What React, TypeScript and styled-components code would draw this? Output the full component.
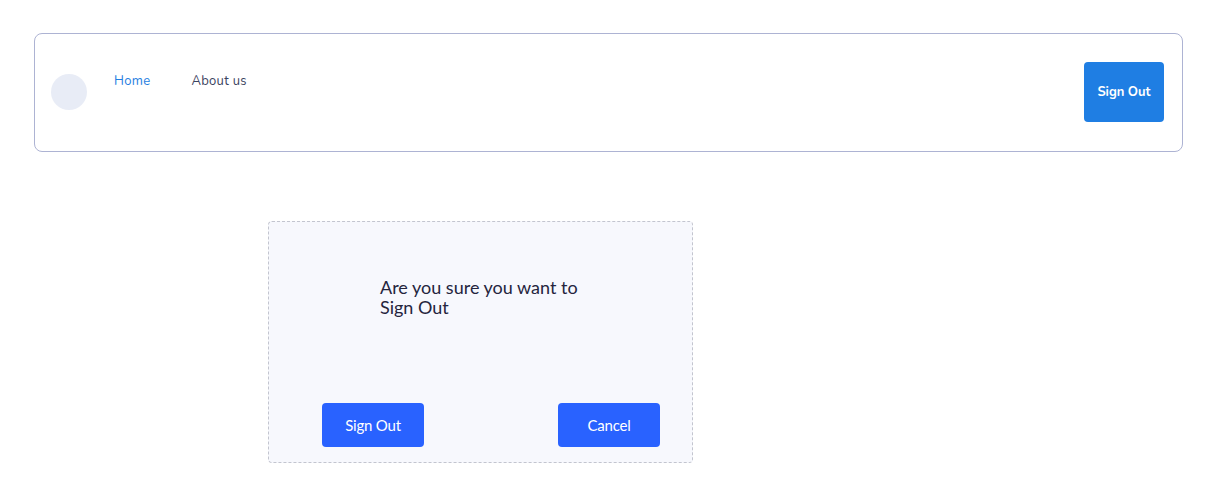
import React from "react";
import styled, { createGlobalStyle } from "styled-components";

const Global = createGlobalStyle`
  html, body { margin: 0; padding: 0; background: #ffffff; }
  body { font-family: Lato, "Liberation Sans", sans-serif; }
  * { box-sizing: border-box; }
`;

const Page = styled.div`
  padding: 33px 33px 0 34px;
  display: flex;
  flex-direction: column;
`;

const Nav = styled.nav`
  height: 119px;
  border: 1px solid #adb3d3;
  border-radius: 8px;
  display: flex;
  align-items: center;
  padding: 0 18px 0 16px;
`;

const Avatar = styled.div`
  width: 36px;
  height: 36px;
  border-radius: 50%;
  background: #e8ecf6;
  margin-top: -1px;
`;

const Links = styled.ul`
  list-style: none;
  margin: 0 0 0 27px;
  padding: 0;
  display: flex;
  gap: 41px;
  align-self: flex-start;
  margin-top: 38px;
`;

const LinkItem = styled.li<{ $active?: boolean }>`
  font-family: Nunito, "Noto Sans", "Open Sans", sans-serif;
  font-size: 13px;
  line-height: 18px;
  letter-spacing: 0.3px;
  color: ${(p) => (p.$active ? "#1f7ee1" : "#3b4360")};
`;

const NavButton = styled.button`
  margin-left: auto;
  margin-top: -2px;
  width: 80px;
  height: 60px;
  border: none;
  border-radius: 4px;
  background: #1f7ee3;
  color: #ffffff;
  font-family: Nunito, "Noto Sans", "Open Sans", sans-serif;
  font-weight: 700;
  font-size: 13px;
`;

const Dialog = styled.div`
  margin: 69px 0 0 234px;
  width: 425px;
  height: 242px;
  border: 1px dashed #c3c5cf;
  border-radius: 4px;
  background: #f7f8fd;
  display: flex;
  flex-direction: column;
  justify-content: space-between;
  padding: 55px 32px 15px 53px;
`;

const Message = styled.p`
  margin: 0 0 0 58px;
  max-width: 210px;
  font-family: Lato, "Liberation Sans", sans-serif;
  font-size: 18px;
  line-height: 20px;
  color: #25253d;
`;

const Actions = styled.div`
  display: flex;
  justify-content: space-between;
`;

const ActionButton = styled.button`
  width: 102px;
  height: 44px;
  border: none;
  border-radius: 4px;
  background: #2962ff;
  color: #ffffff;
  font-family: Lato, "Liberation Sans", sans-serif;
  font-size: 15px;
  letter-spacing: -0.2px;
`;

export default function App() {
  return (
    <>
      <Global />
      <Page>
        <Nav>
          <Avatar />
          <Links>
            <LinkItem $active>Home</LinkItem>
            <LinkItem>About us</LinkItem>
          </Links>
          <NavButton>Sign Out</NavButton>
        </Nav>
        <Dialog>
          <Message>Are you sure you want to Sign Out</Message>
          <Actions>
            <ActionButton>Sign Out</ActionButton>
            <ActionButton>Cancel</ActionButton>
          </Actions>
        </Dialog>
      </Page>
    </>
  );
}
